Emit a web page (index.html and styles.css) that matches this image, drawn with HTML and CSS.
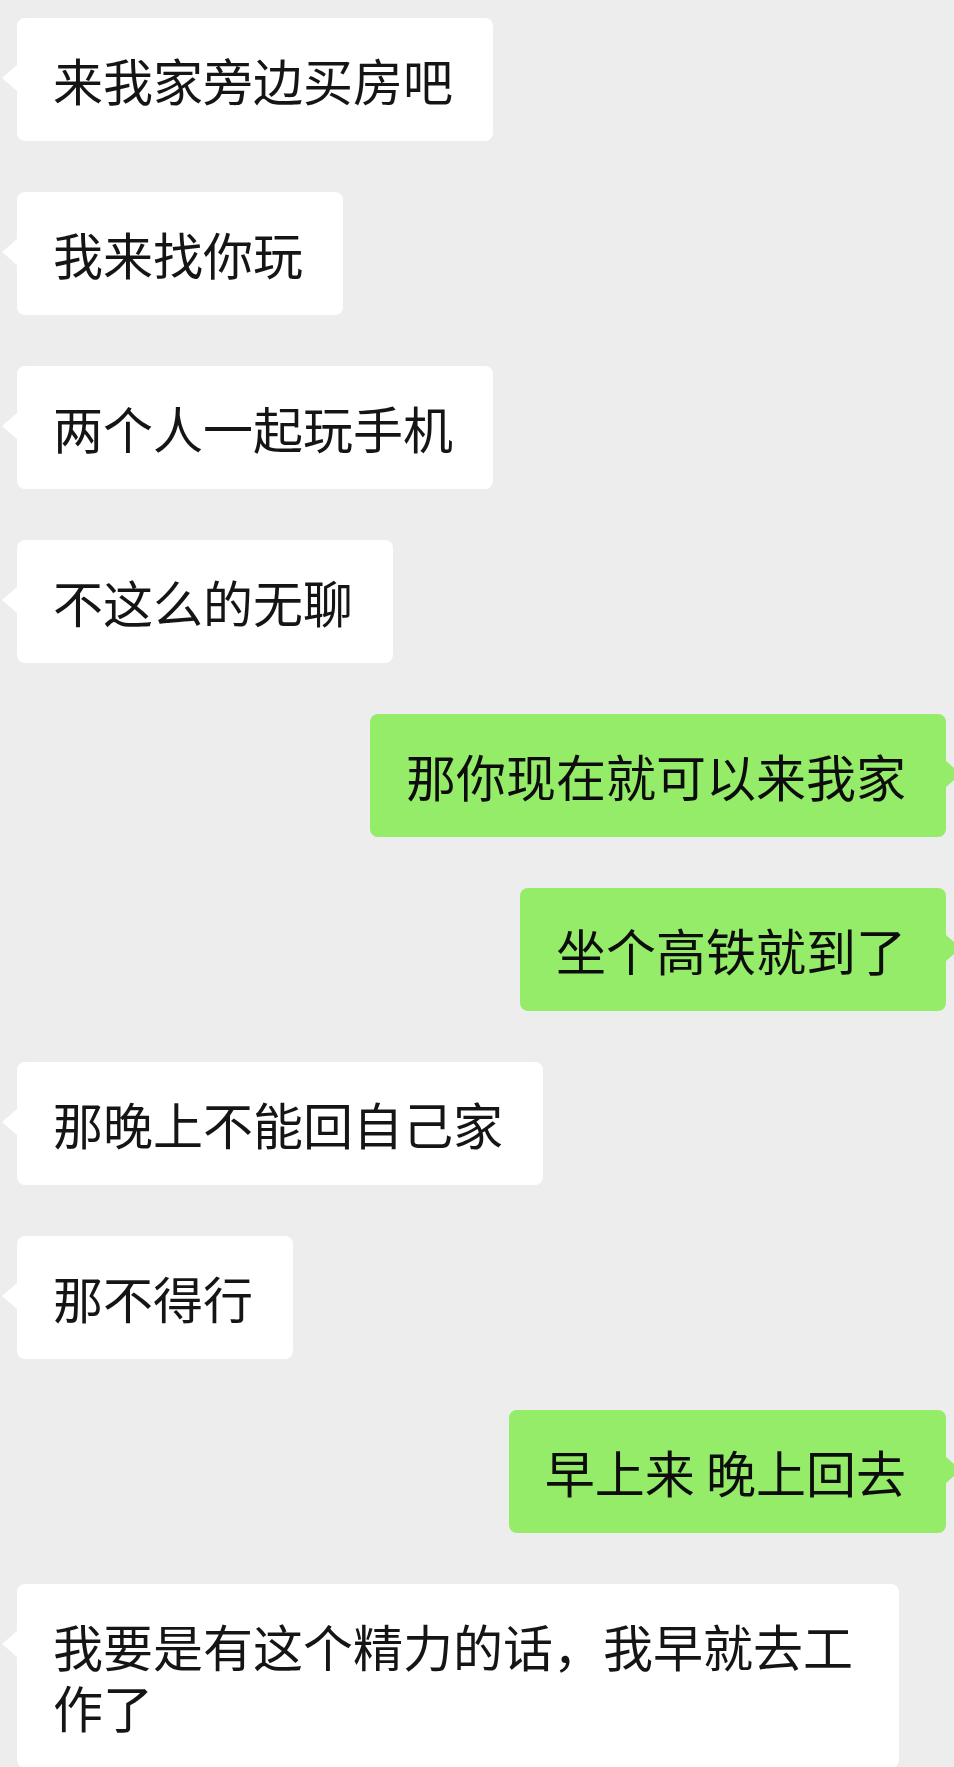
FILE: index.html
```html
<!DOCTYPE html>
<html lang="zh-CN">
<head>
    <meta charset="UTF-8">
    <meta name="viewport" content="width=device-width, initial-scale=1.0">
    <title>聊天记录</title>
    <link rel="stylesheet" href="styles.css">
</head>
<body>
    <div class="chat-box">
        <div class="chat-message other-message">来我家旁边买房吧</div>
        <div class="chat-message other-message">我来找你玩</div>
        <div class="chat-message other-message">两个人一起玩手机</div>
        <div class="chat-message other-message">不这么的无聊</div>
        <div class="chat-message self-message">那你现在就可以来我家</div>
        <div class="chat-message self-message">坐个高铁就到了</div>
        <div class="chat-message other-message">那晚上不能回自己家</div>
        <div class="chat-message other-message">那不得行</div>
        <div class="chat-message self-message">早上来 晚上回去</div>
        <div class="chat-message other-message">我要是有这个精力的话，我早就去工作了</div>
    </div>
</body>
</html>
```
FILE: styles.css
```css
body {
    font-family: "Noto Sans CJK SC", "Noto Sans", sans-serif;
    margin: 0;
    padding: 0;
    background-color: #ededed;
    color: #151515;
    overflow: hidden;
}

.chat-box {
    display: flex;
    flex-direction: column;
    gap: 51px;
    padding: 18px 8px 0 17px;
}

.chat-message {
    position: relative;
    max-width: 806px;
    padding: 31px 40px 31px 36px;
    border-radius: 8px;
    font-size: 50px;
    line-height: 61px;
    word-break: break-all;
}

.chat-message::before {
    content: "";
    position: absolute;
    top: 47px;
    border-top: 13px solid transparent;
    border-bottom: 13px solid transparent;
}

.other-message {
    align-self: flex-start;
    background: #fff;
}

.other-message::before {
    left: -15px;
    border-right: 15px solid #fff;
}

.self-message {
    align-self: flex-end;
    background: #95ec69;
    color: #0d0d0d;
}

.self-message::before {
    right: -15px;
    border-left: 15px solid #95ec69;
}
```
